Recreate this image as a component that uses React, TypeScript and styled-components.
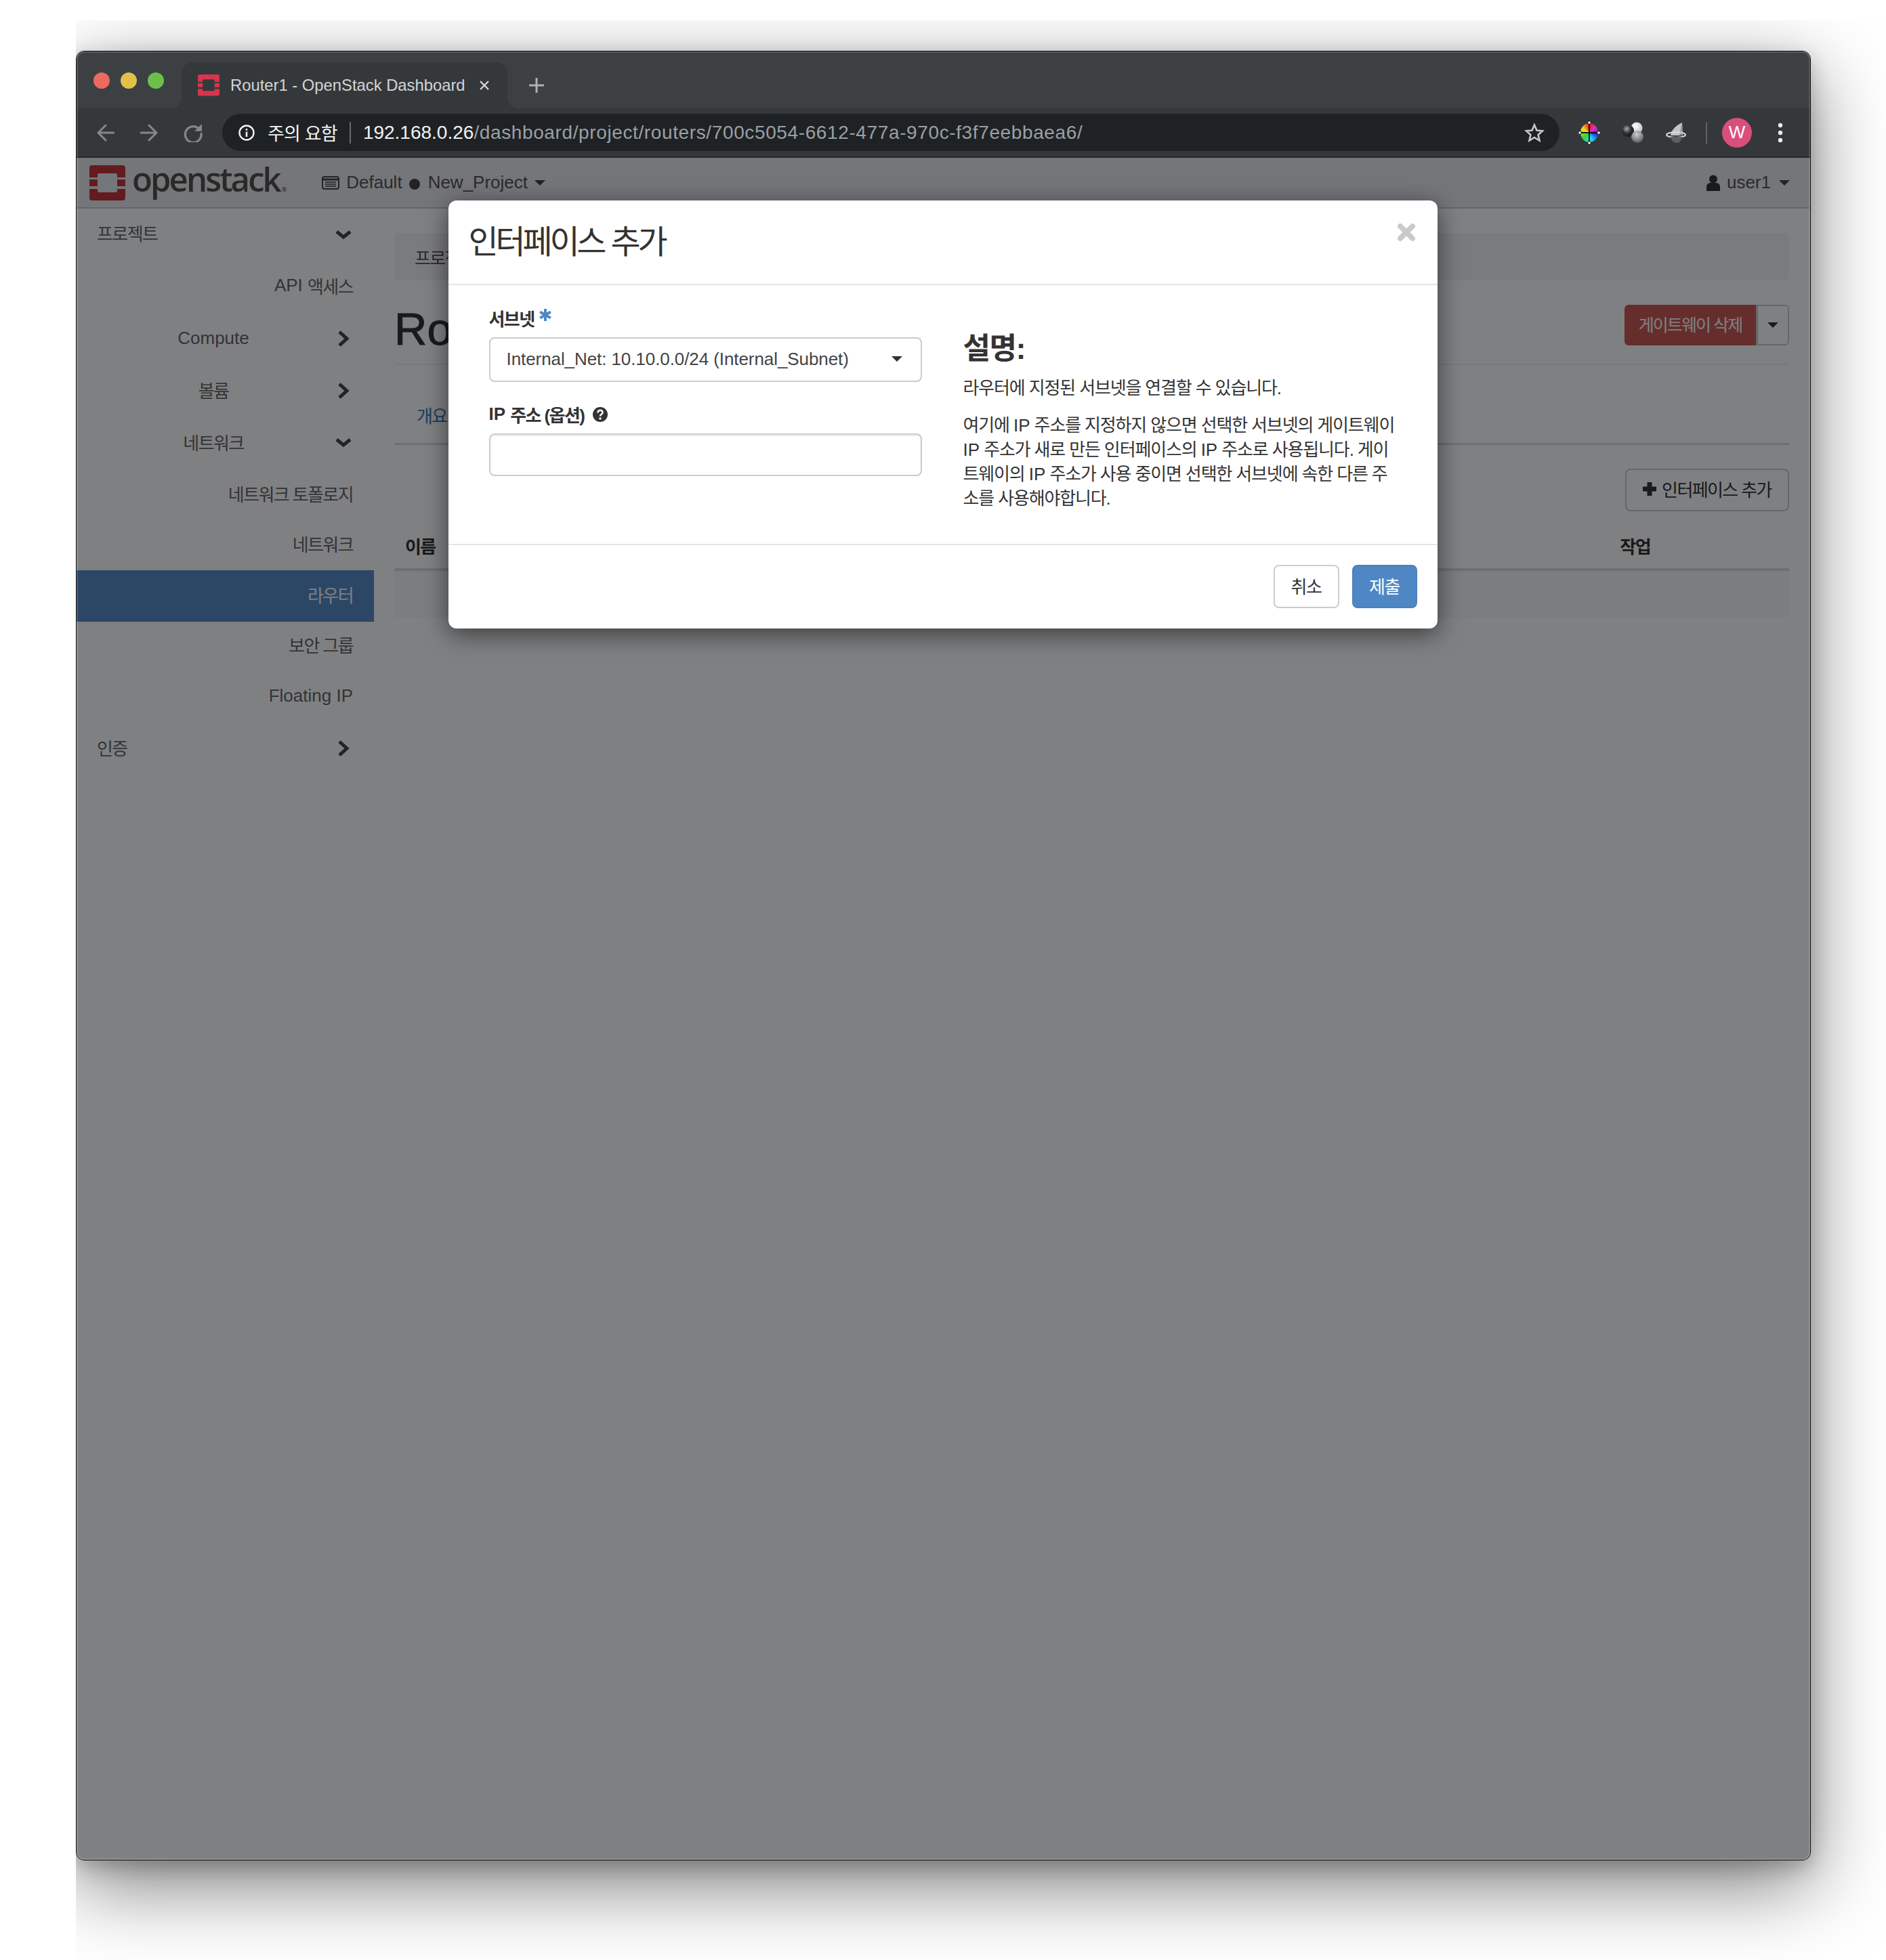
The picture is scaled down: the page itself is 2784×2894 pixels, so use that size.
import React from "react";
import styled, { createGlobalStyle } from "styled-components";

const SANS = `"Liberation Sans", "Noto Sans CJK KR", sans-serif`;

const GlobalStyle = createGlobalStyle`
  html, body { margin: 0; padding: 0; background: #fff; }
  * { box-sizing: border-box; }
  body { font-family: ${SANS}; font-size: 26px; color: #333; }
`;

// the screenshot's shadow is cut off at the left and the top
const ShadowClip = styled.div`
  width: 2672px;
  height: 2864px;
  margin: 30px 0 0 112px;
  padding-top: 45px;
  overflow: hidden;
`;
const Win = styled.div`
  position: relative;
  width: 2561px;
  height: 2672px;
  border: 1px solid #111;
  border-radius: 12px;
  background: #fff;
  overflow: hidden;
  box-shadow: 0 36px 116px 2px rgba(0, 0, 0, 0.5), 0 10px 30px rgba(0, 0, 0, 0.22);
  display: flex;
  flex-direction: column;
  &::after {
    content: "";
    position: absolute;
    inset: 0;
    border: 2px solid rgba(255, 255, 255, 0.14);
    border-radius: 11px;
    pointer-events: none;
  }
`;

/* browser chrome */
const TabStrip = styled.div`
  height: 84px;
  flex: none;
  background: #3c4043;
  display: flex;
  align-items: flex-end;
  padding-left: 25px;
`;
const Lights = styled.div`
  display: flex;
  gap: 16px;
  margin-bottom: 29px;
`;
const Light = styled.span<{ $c: string }>`
  width: 24px;
  height: 24px;
  border-radius: 50%;
  background: ${(p) => p.$c};
`;
const Tab = styled.div`
  position: relative;
  width: 481px;
  height: 68px;
  margin-left: 26px;
  padding: 0 24px;
  background: #35383b;
  border-radius: 16px 16px 0 0;
  display: flex;
  align-items: center;
  &::before, &::after {
    content: "";
    position: absolute;
    bottom: 0;
    width: 16px;
    height: 16px;
  }
  &::before {
    left: -16px;
    background: radial-gradient(circle at 0 0, transparent 15.5px, #35383b 16px);
  }
  &::after {
    right: -16px;
    background: radial-gradient(circle at 100% 0, transparent 15.5px, #35383b 16px);
  }
`;
const TabTitle = styled.span`
  margin-left: 16px;
  font-size: 23.8px;
  color: #d3d5d7;
  white-space: nowrap;
`;
const TabClose = styled.svg`
  margin-left: 20px;
  flex: none;
`;
const NewTab = styled.svg`
  margin: 0 0 23px 32px;
`;
const Toolbar = styled.div`
  height: 73px;
  flex: none;
  background: #35383b;
  border-bottom: 2px solid #232527;
  display: flex;
  align-items: center;
  padding-left: 30px;
`;
const NavIcons = styled.div`
  display: flex;
  gap: 38px;
  align-items: center;
`;
const Omnibox = styled.div`
  width: 1974px;
  height: 55px;
  margin-left: 29px;
  padding: 0 24px;
  border-radius: 28px;
  background: #1f2224;
  display: flex;
  align-items: center;
  white-space: nowrap;
`;
const Warn = styled.span`
  margin-left: 19px;
  font-size: 27px;
  letter-spacing: -0.8px;
  color: #f1f3f4;
`;
const OmniDivider = styled.span`
  width: 2px;
  height: 32px;
  margin: 0 18px 0 18px;
  background: #6a6d70;
`;
const Host = styled.span`
  font-size: 28px;
  color: #f1f3f4;
`;
const Path = styled.span`
  font-size: 28px;
  letter-spacing: 0.62px;
  color: #9aa0a6;
`;
const StarBox = styled.svg`
  margin-left: auto;
  margin-right: -2px;
`;
const Exts = styled.div`
  display: flex;
  align-items: center;
  margin-left: 31px;
`;
const Wheel = styled.div`
  position: relative;
  width: 26px;
  height: 28px;
  border-radius: 50%;
  background: conic-gradient(#e0202a, #e030c0 50deg, #3020e0 100deg, #1090f0 130deg, #30e0e0 170deg, #30d040 230deg, #a0e020 265deg, #f0e020 300deg, #f08020 330deg, #e0202a);
`;
const WheelCross = styled.svg`
  position: absolute;
  left: -6px;
  top: -5px;
`;
const ExtSvg = styled.svg<{ $ml: number }>`
  margin-left: ${(p) => p.$ml}px;
  flex: none;
`;
const ToolDivider = styled.span`
  width: 2px;
  height: 32px;
  margin-left: 29px;
  background: #5f6265;
`;
const Avatar = styled.span`
  width: 44px;
  height: 44px;
  margin-left: 22px;
  border-radius: 50%;
  background: #d94f7c;
  color: #fff;
  font-size: 26px;
  display: flex;
  align-items: center;
  justify-content: center;
`;
const Dots = styled.svg`
  margin-left: 38px;
`;

/* openstack page */
const Nav = styled.div`
  height: 75px;
  flex: none;
  background: #e8eaec;
  border-bottom: 2px solid #ccc;
  padding: 0 30px 0 19px;
  display: flex;
  align-items: center;
`;
const Brand = styled.span`
  margin: 5px 0 0 10px;
  font-family: "Open Sans", sans-serif;
  font-size: 49px;
  font-weight: 600;
  line-height: 60px;
  letter-spacing: -2.9px;
  color: #55514b;
  display: flex;
  align-items: baseline;
`;
const Reg = styled.span`
  font-size: 9px;
  letter-spacing: 0;
  margin-left: 3px;
`;
const NavText = styled.span`
  font-size: 26px;
  color: #555;
  white-space: nowrap;
`;
const ProjectPicker = styled.div`
  margin-left: 52px;
  display: flex;
  align-items: center;
`;
const Dot = styled.span`
  width: 16px;
  height: 16px;
  margin: 4px 12px 0 10px;
  border-radius: 50%;
  background: #444;
`;
const Caret = styled.span<{ $ml?: number; $c?: string }>`
  display: inline-block;
  width: 0;
  height: 0;
  margin-left: ${(p) => p.$ml ?? 10}px;
  border-top: 8px solid ${(p) => p.$c ?? "#444"};
  border-left: 8px solid transparent;
  border-right: 8px solid transparent;
`;
const UserMenu = styled.div`
  margin-left: auto;
  display: flex;
  align-items: center;
  gap: 10px;
`;
const PageBody = styled.div`
  flex: 1;
  display: flex;
  min-height: 0;
`;
const Sidebar = styled.div`
  width: 439px;
  flex: none;
`;
const CatRow = styled.div`
  height: 77px;
  padding-left: 30px;
  padding-right: 25px;
  display: flex;
  align-items: center;
  color: #666;
`;
const CatLabel = styled.span<{ $center?: boolean; $lift?: number }>`
  flex: 1;
  margin-bottom: ${(p) => p.$lift ?? 6}px;
  text-align: ${(p) => (p.$center ? "center" : "left")};
`;
const SubRow = styled.div<{ $active?: boolean; $h: number; $lift: number }>`
  height: ${(p) => p.$h}px;
  padding-right: 31px;
  padding-bottom: ${(p) => p.$lift}px;
  display: flex;
  align-items: center;
  justify-content: flex-end;
  color: ${(p) => (p.$active ? "#fff" : "#666")};
  background: ${(p) => (p.$active ? "#588cc6" : "transparent")};
`;
const Ko = styled.span`
  letter-spacing: -1.6px;
`;
const Main = styled.div`
  flex: 1;
  min-width: 0;
  padding: 36px 31px 0 30px;
`;
const Breadcrumb = styled.div`
  height: 70px;
  padding-left: 30px;
  border-radius: 8px;
  background: #f5f5f5;
  display: flex;
  align-items: center;
  color: #555;
  letter-spacing: -1.6px;
`;
const PageHeader = styled.div`
  height: 125px;
  border-bottom: 2px solid #eee;
  display: flex;
  align-items: center;
  justify-content: space-between;
`;
const Heading = styled.h1`
  margin: 20px 0 0;
  font-size: 67px;
  font-weight: 400;
  line-height: 1;
  color: #333;
  -webkit-text-stroke: 1px #333;
`;
const BtnGroup = styled.div`
  display: flex;
  height: 60px;
  margin-top: 8px;
`;
const DangerBtn = styled.div`
  width: 194px;
  background: #ca5a54;
  color: #fff;
  border-radius: 6px 0 0 6px;
  padding-bottom: 3px;
  font-size: 25px;
  letter-spacing: -1.9px;
  display: flex;
  align-items: center;
  justify-content: center;
`;
const ToggleBtn = styled.div`
  width: 49px;
  border: 2px solid #ccc;
  border-left-width: 3px;
  border-radius: 0 6px 6px 0;
  display: flex;
  align-items: center;
  justify-content: center;
`;
const Tabs = styled.div`
  height: 118px;
  padding: 55px 0 0 33px;
  border-bottom: 3px solid #ddd;
  color: #3877b5;
  letter-spacing: -1.6px;
`;
const TableTools = styled.div`
  margin-top: 35px;
  display: flex;
  justify-content: flex-end;
`;
const AddBtn = styled.div`
  width: 242px;
  height: 63px;
  padding-bottom: 4px;
  border: 2px solid #ccc;
  border-radius: 8px;
  display: flex;
  align-items: center;
  justify-content: center;
  gap: 8px;
  color: #333;
`;
const TableHead = styled.div`
  height: 88px;
  padding: 32px 205px 0 16px;
  border-bottom: 4px solid #ddd;
  display: flex;
  justify-content: space-between;
  font-weight: 700;
  letter-spacing: -1.6px;
`;
const TableRow = styled.div`
  height: 69px;
  background: #f9f9f9;
`;

/* modal */
const Backdrop = styled.div`
  position: absolute;
  left: 0;
  right: 0;
  top: 157px;
  bottom: 0;
  padding: 63px 2px 0 0;
  background: rgba(0, 2, 6, 0.5);
  display: flex;
  justify-content: center;
  align-items: flex-start;
`;
const Modal = styled.div`
  width: 1460px;
  height: 632px;
  background: #fff;
  border-radius: 12px;
  box-shadow: 0 8px 36px rgba(0, 0, 0, 0.55);
  display: flex;
  flex-direction: column;
`;
const ModalHeader = styled.div`
  height: 125px;
  flex: none;
  padding: 0 30px;
  border-bottom: 2px solid #e5e5e5;
  display: flex;
  align-items: flex-start;
  justify-content: space-between;
`;
const ModalTitle = styled.h4`
  margin: 31px 0 0;
  font-size: 48px;
  font-weight: 400;
  line-height: 62px;
  letter-spacing: -4.2px;
  word-spacing: 1px;
  color: #333;
`;
const CloseX = styled.svg`
  margin: 33px 2px 0 0;
`;
const ModalBody = styled.div`
  flex: 1;
  display: grid;
  grid-template-columns: 639px 1fr;
  column-gap: 61px;
  padding: 0 30px 0 60px;
`;
const Field = styled.div`
  display: flex;
  flex-direction: column;
`;
const Label = styled.label`
  height: 30px;
  padding-bottom: 2px;
  display: flex;
  align-items: center;
  font-weight: 700;
  font-size: 26px;
  white-space: nowrap;
  color: #333;
`;
const AsteriskIcon = styled.svg`
  margin: -8px 0 0 8px;
`;
const HelpIcon = styled.svg`
  margin: 2px 0 0 13px;
`;
const SelectBox = styled.div`
  height: 66px;
  margin-top: 13px;
  padding: 0 27px 2px 24px;
  border: 2px solid #ccc;
  border-radius: 8px;
  display: flex;
  align-items: center;
  justify-content: space-between;
  white-space: nowrap;
  letter-spacing: -0.08px;
  color: #444;
`;
const TextBox = styled.div`
  height: 63px;
  margin-top: 13px;
  border: 2px solid #ccc;
  border-radius: 8px;
  box-shadow: inset 0 2px 2px rgba(0, 0, 0, 0.075);
`;
const LeftCol = styled.div`
  padding-top: 34px;
  display: flex;
  flex-direction: column;
  gap: 33px;
`;
const HelpCol = styled.div`
  padding-top: 70px;
`;
const HelpTitle = styled.h3`
  margin: 0;
  height: 48px;
  font-size: 44px;
  line-height: 48px;
  font-weight: 700;
  letter-spacing: -1.4px;
  color: #333;
`;
const HelpText = styled.p`
  margin: 16px 0 0;
  font-size: 26px;
  line-height: 36px;
  letter-spacing: -1.14px;
  white-space: nowrap;
  color: #333;
  & + & {
    margin-top: 19px;
  }
`;
const Lat = styled.span`
  letter-spacing: 0;
`;
const ModalFooter = styled.div`
  height: 125px;
  flex: none;
  padding: 29px 30px 0 0;
  border-top: 2px solid #e5e5e5;
  display: flex;
  justify-content: flex-end;
  gap: 19px;
`;
const Button = styled.div<{ $primary?: boolean }>`
  width: ${(p) => (p.$primary ? 96 : 97)}px;
  height: 64px;
  padding-bottom: 4px;
  border-radius: 8px;
  border: 2px solid ${(p) => (p.$primary ? "#4a80bc" : "#ccc")};
  background: ${(p) => (p.$primary ? "#4f87c5" : "#fff")};
  color: ${(p) => (p.$primary ? "#fff" : "#333")};
  letter-spacing: -1.4px;
  display: flex;
  align-items: center;
  justify-content: center;
`;

const Logo = ({ size, color }: { size: number; color: string }) => (
  <svg width={size} height={size * 52 / 53} viewBox="0 0 53 52" style={{ flex: "none" }}>
    <path fill={color} fillRule="evenodd" d="M4 0H49a4 4 0 0 1 4 4V18H41V14a2 2 0 0 0-2-2H14a2 2 0 0 0-2 2V18H0V4a4 4 0 0 1 4-4Z" />
    <path fill={color} d="M0 21H12V31H0ZM41 21H53V31H41Z" />
    <path fill={color} d="M0 35H12V38a2 2 0 0 0 2 2H39a2 2 0 0 0 2-2V35H53V48a4 4 0 0 1-4 4H4a4 4 0 0 1-4-4Z" />
  </svg>
);

const ChevronDown = () => (
  <svg width="40" height="18" viewBox="0 0 40 18">
    <polyline points="10,4 20,12 30,4" fill="none" stroke="#444" strokeWidth="5" />
  </svg>
);
const ChevronRight = () => (
  <svg width="40" height="26" viewBox="0 0 40 26">
    <polyline points="14,3 25,13 14,23" fill="none" stroke="#444" strokeWidth="5" />
  </svg>
);

const Arrow = ({ flip }: { flip?: boolean }) => (
  <svg width="26" height="26" viewBox="0 0 26 26" style={flip ? { transform: "scaleX(-1)" } : undefined}>
    <path d="M25 13H2M13 2 2 13l11 11" fill="none" stroke="#85888a" strokeWidth="3" strokeLinecap="round" strokeLinejoin="round" />
  </svg>
);

const App: React.FC = () => (
  <>
    <GlobalStyle />
    <ShadowClip>
      <Win>
        <TabStrip>
          <Lights>
            <Light $c="#ed6a5e" />
            <Light $c="#e2c04c" />
            <Light $c="#6cc04a" />
          </Lights>
          <Tab>
            <Logo size={32} color="#d9344e" />
            <TabTitle>Router1 - OpenStack Dashboard</TabTitle>
            <TabClose width="16" height="16" viewBox="0 0 16 16">
              <path d="M2 2l12 12M14 2 2 14" stroke="#d3d5d7" strokeWidth="2.4" />
            </TabClose>
          </Tab>
          <NewTab width="22" height="22" viewBox="0 0 22 22">
            <path d="M11 0v22M0 11h22" stroke="#aeb1b4" strokeWidth="3" />
          </NewTab>
        </TabStrip>
        <Toolbar>
          <NavIcons>
            <Arrow />
            <Arrow flip />
            <svg width="28" height="28" viewBox="0 0 26 26">
              <path d="M21 7.500A11 11 0 1 0 24 13" fill="none" stroke="#85888a" strokeWidth="3" />
              <path d="M25 1V11H15Z" fill="#85888a" />
            </svg>
          </NavIcons>
          <Omnibox>
            <svg width="24" height="24" viewBox="0 0 24 24">
              <circle cx="12" cy="12" r="10.500" fill="none" stroke="#f1f3f4" strokeWidth="2.400" />
              <path d="M12 10.500V18M12 6v2.600" stroke="#f1f3f4" strokeWidth="2.600" />
            </svg>
            <Warn>주의 요함</Warn>
            <OmniDivider />
            <Host>192.168.0.26</Host>
            <Path>/dashboard/project/routers/700c5054-6612-477a-970c-f3f7eebbaea6/</Path>
            <StarBox width="30" height="30" viewBox="0 0 30 30">
              <path d="M15 3.500l3.500 8 8.500.8-6.400 5.700 1.900 8.500L15 22l-7.500 4.500 1.900-8.500L3 12.300l8.500-.8Z" fill="none" stroke="#c6c8ca" strokeWidth="2.600" />
            </StarBox>
          </Omnibox>
          <Exts>
            <Wheel>
              <WheelCross width="38" height="38" viewBox="0 0 38 38">
                <path d="M19 2v34M2 19h34" stroke="#111" strokeWidth="2" />
                <circle cx="19" cy="4" r="2.500" fill="#ddd" stroke="#111" />
                <circle cx="19" cy="34" r="2.500" fill="#ddd" stroke="#111" />
                <circle cx="5" cy="19" r="2.500" fill="#ddd" stroke="#111" />
                <circle cx="33" cy="19" r="2.500" fill="#ddd" stroke="#111" />
              </WheelCross>
            </Wheel>
            <ExtSvg $ml={35} width="32" height="32" viewBox="0 0 32 32">
              <defs>
                <radialGradient id="ballW" cx="0.4" cy="0.35" r="0.7">
                  <stop offset="0" stopColor="#fff" />
                  <stop offset="1" stopColor="#bdbdbd" />
                </radialGradient>
                <radialGradient id="ballK" cx="0.4" cy="0.35" r="0.7">
                  <stop offset="0" stopColor="#aaa" />
                  <stop offset="0.5" stopColor="#333" />
                  <stop offset="1" stopColor="#111" />
                </radialGradient>
                <radialGradient id="ballG" cx="0.45" cy="0.3" r="0.75">
                  <stop offset="0" stopColor="#ccc" />
                  <stop offset="1" stopColor="#555" />
                </radialGradient>
              </defs>
              <circle cx="22" cy="9" r="8.500" fill="url(#ballW)" />
              <circle cx="9" cy="13" r="9" fill="url(#ballK)" />
              <circle cx="23" cy="22" r="9" fill="url(#ballG)" />
            </ExtSvg>
            <ExtSvg $ml={33} width="30" height="32" viewBox="0 0 30 32">
              <path d="M24 1C15 5 8 12 7 20h18Z" fill="#c4c4c4" />
              <path d="M24 1l1 19h-5Z" fill="#8e8e8e" />
              <ellipse cx="15" cy="19" rx="14" ry="4" fill="none" stroke="#d8d8d8" strokeWidth="2" />
              <path d="M7 22h17c-1 6-4 9-8 9s-8-3-9-9Z" fill="#5f5f5f" />
            </ExtSvg>
            <ToolDivider />
            <Avatar>W</Avatar>
            <Dots width="8" height="32" viewBox="0 0 8 32">
              <circle cx="4" cy="5" r="3.200" fill="#e8eaed" />
              <circle cx="4" cy="16" r="3.200" fill="#e8eaed" />
              <circle cx="4" cy="27" r="3.200" fill="#e8eaed" />
            </Dots>
          </Exts>
        </Toolbar>
        <Nav>
          <Logo size={53} color="#c6343a" />
          <Brand>openstack<Reg>®</Reg></Brand>
          <ProjectPicker>
            <svg width="26" height="20" viewBox="0 0 26 20" style={{ marginRight: 10 }}>
              <rect x="1" y="1" width="24" height="18" rx="3" fill="none" stroke="#444" strokeWidth="2" />
              <path d="M1 5h24" stroke="#444" strokeWidth="3" />
              <path d="M5 9h16M5 12h16M5 15h16" stroke="#444" strokeWidth="1.500" />
            </svg>
            <NavText>Default</NavText>
            <Dot />
            <NavText>New_Project</NavText>
            <Caret />
          </ProjectPicker>
          <UserMenu>
            <svg width="20" height="24" viewBox="0 0 20 24">
              <circle cx="10" cy="6.500" r="6" fill="#333" />
              <path d="M0 24V18c0-4 3-6 6-6h8c3 0 6 2 6 6v6Z" fill="#333" />
            </svg>
            <NavText>user1</NavText>
            <Caret $ml={2} />
          </UserMenu>
        </Nav>
        <PageBody>
          <Sidebar>
            <CatRow><CatLabel><Ko>프로젝트</Ko></CatLabel><ChevronDown /></CatRow>
            <SubRow $h={76} $lift={4}>API&nbsp;<Ko>액세스</Ko></SubRow>
            <CatRow><CatLabel $center $lift={0}>Compute</CatLabel><ChevronRight /></CatRow>
            <CatRow><CatLabel $center $lift={2}><Ko>볼륨</Ko></CatLabel><ChevronRight /></CatRow>
            <CatRow><CatLabel $center $lift={2}><Ko>네트워크</Ko></CatLabel><ChevronDown /></CatRow>
            <SubRow $h={75} $lift={2}><Ko>네트워크 토폴로지</Ko></SubRow>
            <SubRow $h={75} $lift={4}><Ko>네트워크</Ko></SubRow>
            <SubRow $h={76} $active $lift={6}><Ko>라우터</Ko></SubRow>
            <SubRow $h={74} $lift={8}><Ko>보안 그룹</Ko></SubRow>
            <SubRow $h={74} $lift={3}>Floating IP</SubRow>
            <CatRow><CatLabel $lift={3}><Ko>인증</Ko></CatLabel><ChevronRight /></CatRow>
          </Sidebar>
          <Main>
            <Breadcrumb>프로젝트</Breadcrumb>
            <PageHeader>
              <Heading>Router1</Heading>
              <BtnGroup>
                <DangerBtn>게이트웨이 삭제</DangerBtn>
                <ToggleBtn><Caret $ml={0} $c="#333" /></ToggleBtn>
              </BtnGroup>
            </PageHeader>
            <Tabs>개요</Tabs>
            <TableTools>
              <AddBtn>
                <svg width="20" height="22" viewBox="0 0 20 22">
                  <path d="M10 1v20M0 11h20" stroke="#333" strokeWidth="7" />
                </svg>
                <Ko>인터페이스 추가</Ko>
              </AddBtn>
            </TableTools>
            <TableHead>
              <span>이름</span>
              <span>작업</span>
            </TableHead>
            <TableRow />
          </Main>
        </PageBody>
        <Backdrop>
          <Modal>
            <ModalHeader>
              <ModalTitle>인터페이스 추가</ModalTitle>
              <CloseX width="28" height="28" viewBox="0 0 28 28">
                <path d="M5 5l18 18M23 5 5 23" stroke="#c9cacb" strokeWidth="8" strokeLinecap="round" />
              </CloseX>
            </ModalHeader>
            <ModalBody>
              <LeftCol>
                <Field>
                  <Label>
                    <Ko>서브넷</Ko>
                    <AsteriskIcon width="18" height="18" viewBox="0 0 18 18">
                      <path d="M9 0v18M1.200 4.500l15.600 9M16.800 4.500l-15.600 9" stroke="#4f87c5" strokeWidth="4" />
                    </AsteriskIcon>
                  </Label>
                  <SelectBox>
                    Internal_Net: 10.10.0.0/24 (Internal_Subnet)
                    <Caret $ml={0} $c="#333" />
                  </SelectBox>
                </Field>
                <Field>
                  <Label>
                    IP&nbsp;<Ko>주소 (옵션)</Ko>
                    <HelpIcon width="22" height="22" viewBox="0 0 22 22">
                      <circle cx="11" cy="11" r="11" fill="#333" />
                      <path d="M7.500 8.500c0-5 7-5 7-.5 0 3-3.500 2.500-3.500 5.500" fill="none" stroke="#fff" strokeWidth="2.600" />
                      <rect x="9.500" y="15.500" width="3" height="3" fill="#fff" />
                    </HelpIcon>
                  </Label>
                  <TextBox />
                </Field>
              </LeftCol>
              <HelpCol>
                <HelpTitle>설명:</HelpTitle>
                <HelpText>라우터에 지정된 서브넷을 연결할 수 있습니다.</HelpText>
                <HelpText>
                  여기에 <Lat>IP</Lat> 주소를 지정하지 않으면 선택한 서브넷의 게이트웨이<br />
                  <Lat>IP</Lat> 주소가 새로 만든 인터페이스의 <Lat>IP</Lat> 주소로 사용됩니다. 게이<br />
                  트웨이의 <Lat>IP</Lat> 주소가 사용 중이면 선택한 서브넷에 속한 다른 주<br />
                  소를 사용해야합니다.
                </HelpText>
              </HelpCol>
            </ModalBody>
            <ModalFooter>
              <Button>취소</Button>
              <Button $primary>제출</Button>
            </ModalFooter>
          </Modal>
        </Backdrop>
      </Win>
    </ShadowClip>
  </>
);

export default App;
